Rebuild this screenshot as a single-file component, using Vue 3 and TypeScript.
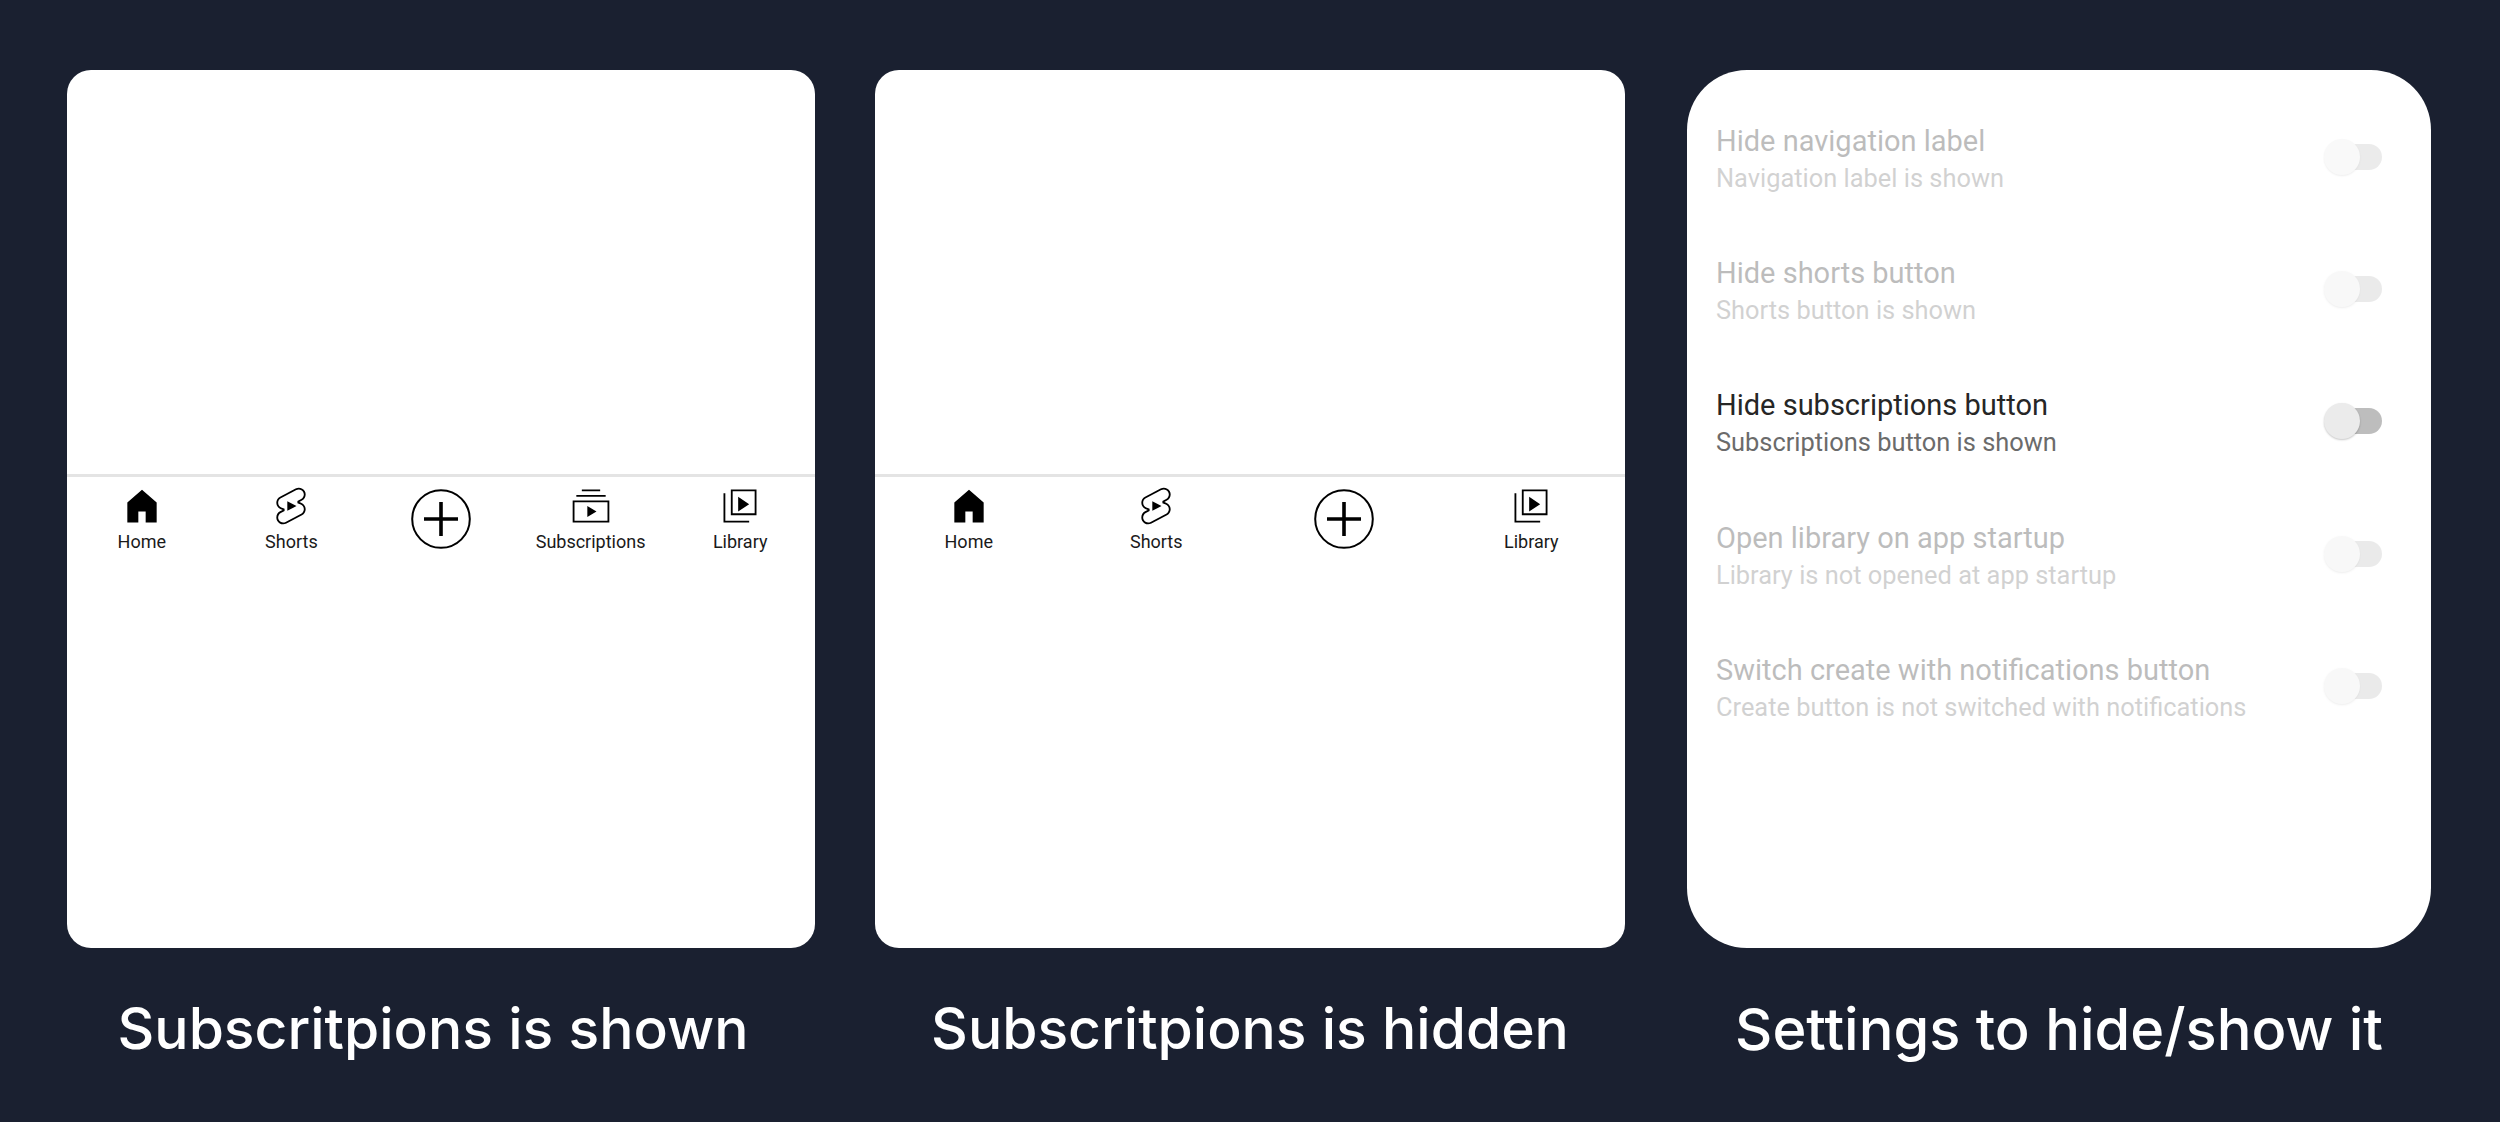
<script setup lang="ts">
type NavItem = { label?: string; icon: string }
type Setting = { title: string; sub: string; active?: boolean }

const home: NavItem = { label: 'Home', icon: 'home' }
const shorts: NavItem = { label: 'Shorts', icon: 'shorts' }
const create: NavItem = { icon: 'create' }
const subs: NavItem = { label: 'Subscriptions', icon: 'subs' }
const library: NavItem = { label: 'Library', icon: 'library' }

const shown = [home, shorts, create, subs, library]
const hidden = [home, shorts, create, library]

const settings: Setting[] = [
  { title: 'Hide navigation label', sub: 'Navigation label is shown' },
  { title: 'Hide shorts button', sub: 'Shorts button is shown' },
  { title: 'Hide subscriptions button', sub: 'Subscriptions button is shown', active: true },
  { title: 'Open library on app startup', sub: 'Library is not opened at app startup' },
  { title: 'Switch create with notifications button', sub: 'Create button is not switched with notifications' },
]

const phones = [
  { items: shown, caption: 'Subscritpions is shown', cls: 'col-a' },
  { items: hidden, caption: 'Subscritpions is hidden', cls: 'col-b' },
]
</script>

<template>
  <main class="page">
    <section v-for="phone in phones" :key="phone.caption" class="col" :class="phone.cls">
      <div class="card">
        <div class="blank"></div>
        <nav class="nav">
          <div v-for="item in phone.items" :key="item.icon" class="nav-item">
            <svg v-if="item.icon === 'home'" class="icon" viewBox="0 0 24 24">
              <path d="M4 21V10.08l8-6.96 8 6.96V21h-6v-6h-4v6H4z" />
            </svg>
            <svg v-else-if="item.icon === 'shorts'" class="icon" viewBox="0 0 24 24">
              <path d="M17.77 10.32c-.77-.32-1.2-.5-1.2-.5L18 9.06c1.84-.96 2.53-3.23 1.56-5.06s-3.24-2.53-5.07-1.56L6 6.94c-1.29.68-2.07 2.04-2 3.49.07 1.42.93 2.67 2.22 3.25.03.01 1.2.5 1.2.5L6 14.93c-1.83.97-2.53 3.24-1.56 5.07.97 1.83 3.24 2.53 5.07 1.56l8.5-4.5c1.29-.68 2.06-2.04 1.99-3.49-.07-1.42-.94-2.68-2.23-3.25zm-.23 5.86l-8.5 4.5c-1.34.71-3.01.2-3.72-1.14-.71-1.34-.2-3.01 1.14-3.72l2.04-1.08v-1.21l-.69-.28-1.11-.46c-.99-.41-1.65-1.35-1.7-2.41-.05-1.06.52-2.06 1.46-2.56l8.5-4.5c1.34-.71 3.01-.2 3.72 1.14.71 1.34.2 3.01-1.14 3.72L15.5 9.26v1.21l1.8.74c.99.41 1.65 1.35 1.7 2.41.05 1.06-.52 2.06-1.46 2.56z" />
              <path d="M10 14.65v-5.3L15 12l-5 2.65z" />
            </svg>
            <svg v-else-if="item.icon === 'create'" class="plus" viewBox="0 0 60 60">
              <circle cx="30" cy="30" r="28.8" fill="none" stroke="#000" stroke-width="2" />
              <path d="M13 28.2h34v3.6H13zM28.2 13h3.6v34h-3.6z" />
            </svg>
            <svg v-else-if="item.icon === 'subs'" class="icon" viewBox="0 0 24 24">
              <path d="M10 18v-6l5 3-5 3zm7-15H7v1h10V3zm3 3H4v1h16V6zm2 3H2v12h20V9zM3 10h18v10H3V10z" />
            </svg>
            <svg v-else class="icon" viewBox="0 0 24 24">
              <path d="M11 7l6 4-6 4V7zm10-4v14H7V3h14zm-1 1H8v12h12V4zM4 5H3v16h14v-1H4V5z" />
            </svg>
            <span v-if="item.label" class="nav-label">{{ item.label }}</span>
          </div>
        </nav>
      </div>
      <h2 class="caption">{{ phone.caption }}</h2>
    </section>

    <section class="col col-c">
      <div class="card card-settings">
        <div v-for="row in settings" :key="row.title" class="row" :class="{ off: !row.active }">
          <div class="row-text">
            <div class="row-title">{{ row.title }}</div>
            <div class="row-sub">{{ row.sub }}</div>
          </div>
          <div class="toggle"><span class="thumb"></span></div>
        </div>
      </div>
      <h2 class="caption">Settings to hide/show it</h2>
    </section>
  </main>
</template>

<style scoped>
.page {
  display: flex;
  height: 1122px;
  box-sizing: border-box;
  padding: 70px 0 0 67px;
  background: #1a2030;
  overflow: hidden;
}

.col {
  display: flex;
  flex-direction: column;
  flex: none;
}

.col-a {
  width: 748px;
  margin-right: 60px;
}

.col-b {
  width: 750px;
  margin-right: 62px;
}

.col-c {
  width: 744px;
}

.card {
  display: flex;
  flex-direction: column;
  height: 878px;
  background: #fff;
  border-radius: 24px;
  overflow: hidden;
}

.blank {
  height: 404px;
  flex: none;
}

.nav {
  display: flex;
  border-top: 3px solid #e4e4e4;
  padding-top: 7px;
}

.nav-item {
  flex: 1;
  display: flex;
  flex-direction: column;
  align-items: center;
}

.icon {
  display: block;
  width: 44px;
  height: 44px;
}

.plus {
  display: block;
  width: 60px;
  height: 60px;
  margin-top: 5px;
}

.nav-label {
  margin-top: 2px;
  font: 400 18px/24px Roboto, sans-serif;
  color: #1a1a1a;
}

.caption {
  margin: 46px 0 0;
  font: 500 57px/70px Inter, sans-serif;
  color: #fff;
  text-align: center;
  white-space: nowrap;
}

.col-a .caption {
  padding-right: 16px;
}

.col-c .caption {
  font-size: 57.8px;
}

.card-settings {
  border-radius: 60px;
  padding: 22px 49px 0 29px;
  box-sizing: border-box;
}

.row {
  display: flex;
  align-items: center;
  justify-content: space-between;
  height: 132.33px;
  flex: none;
}

.row.off {
  opacity: 0.3;
}

.row-title {
  font: 400 29px/36px Roboto, sans-serif;
  color: #262626;
}

.row-sub {
  margin-top: 3px;
  font: 400 25.4px/32px Roboto, sans-serif;
  color: #6b6b6b;
}

.toggle {
  position: relative;
  width: 52px;
  height: 26px;
  margin-bottom: 3px;
  border-radius: 13px;
  background: #bdbdbd;
}

.thumb {
  position: absolute;
  left: -6px;
  top: -5px;
  width: 36px;
  height: 36px;
  border-radius: 50%;
  background: #ebebeb;
  box-shadow: 0 1px 2px rgba(0, 0, 0, 0.22);
}
</style>

<style>
body {
  background: #1a2030;
}
</style>
